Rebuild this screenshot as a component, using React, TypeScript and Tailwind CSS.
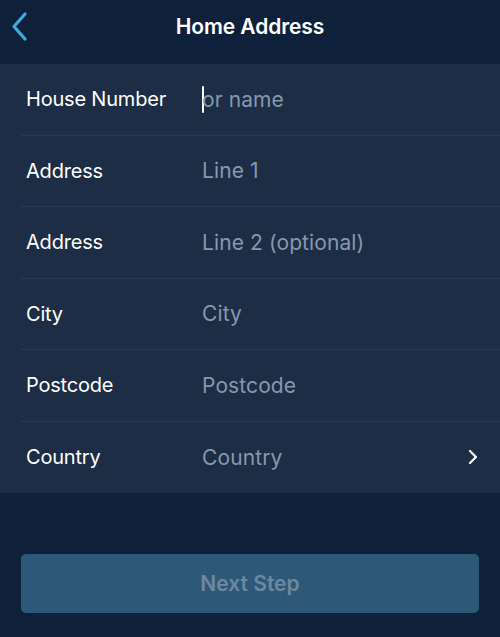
import React from 'react';

const rows = [
  { label: 'House Number', placeholder: 'or name', cursor: true },
  { label: 'Address', placeholder: 'Line 1' },
  { label: 'Address', placeholder: 'Line 2 (optional)' },
  { label: 'City', placeholder: 'City' },
  { label: 'Postcode', placeholder: 'Postcode' },
  { label: 'Country', placeholder: 'Country', chevron: true },
];

export default function App() {
  return (
    <div className="w-[500px] h-[637px] bg-[#0f213a] flex flex-col font-['Inter',sans-serif]">
      {/* Header */}
      <div className="h-[64px] flex items-start pt-[13px] relative">
        <svg className="absolute left-[10px] top-[12px]" width="18" height="29" viewBox="0 0 18 29">
          <path d="M15 2 L4 14.5 L15 27" fill="none" stroke="#3fa9e0" strokeWidth="3.2" strokeLinecap="round" strokeLinejoin="round" />
        </svg>
        <h1 className="flex-1 text-center text-white text-[21px] leading-[28px] font-semibold tracking-[-0.1px]">Home Address</h1>
      </div>

      {/* Form */}
      <div className="bg-[#1d2d45]">
        {rows.map((row, i) => (
          <div key={i} className="pl-[21px]">
            <div
              className={`h-[71.5px] flex items-center pr-[21px] ${
                i < rows.length - 1 ? 'border-b border-[#283951]' : ''
              }`}
            >
              <span className="w-[181px] pl-[5px] text-white text-[20px] tracking-[-0.2px]">{row.label}</span>
              <span className="flex-1 flex items-center text-[#8798ae] text-[21px] tracking-[0.1px]">
                {row.cursor && <span className="w-[2px] h-[27px] bg-white rounded-sm -mr-[2px]" />}
                {row.placeholder}
              </span>
              {row.chevron && (
                <svg width="12" height="18" viewBox="0 0 12 18">
                  <path d="M3 3 L9 9 L3 15" fill="none" stroke="#ffffff" strokeWidth="2.2" strokeLinecap="round" strokeLinejoin="round" />
                </svg>
              )}
            </div>
          </div>
        ))}
      </div>

      {/* Button */}
      <div className="px-[21px] pt-[61px]">
        <button className="w-full h-[59px] rounded-[5px] bg-[#2e5878] text-[#6d889f] text-[21px] font-semibold">
          Next Step
        </button>
      </div>
    </div>
  );
}
